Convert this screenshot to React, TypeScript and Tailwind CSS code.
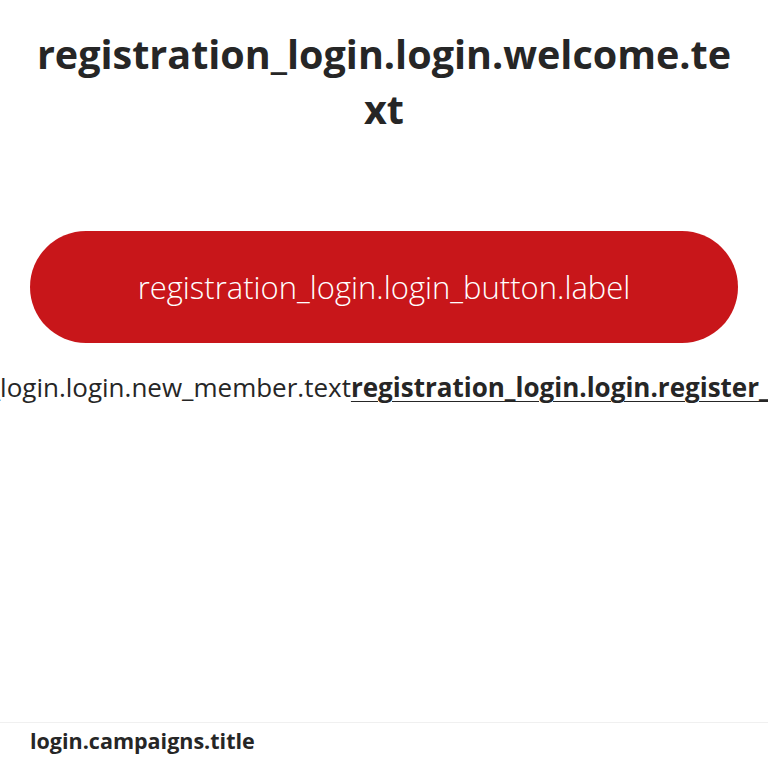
export default function App() {
  return (
    <div className="w-[768px] h-[768px] bg-white overflow-hidden flex flex-col font-['Open_Sans',sans-serif] text-[#262626]">
      <div className="px-[30px] pt-[27px]">
        <h1 className="text-center text-[39.5px] font-bold leading-[55px] break-all">
          registration_login.login.welcome.text
        </h1>
      </div>

      <div className="px-[30px] mt-[94px]">
        <button className="w-full h-[112px] rounded-full bg-[#c8161a] text-white text-[31px] font-light">
          registration_login.login_button.label
        </button>
      </div>

      <div className="flex justify-center mt-[26px] whitespace-nowrap text-[26px] leading-[36px]">
        <span>registration_login.login.new_member.text</span>
        <a className="font-bold underline underline-offset-4 decoration-1">
          registration_login.login.register_button.text
        </a>
      </div>

      <div className="mt-auto border-t border-[#f0f0f0] px-[30px] pt-[3px] h-[46px]">
        <h2 className="text-[21.5px] font-bold leading-[30px]">login.campaigns.title</h2>
      </div>
    </div>
  );
}
